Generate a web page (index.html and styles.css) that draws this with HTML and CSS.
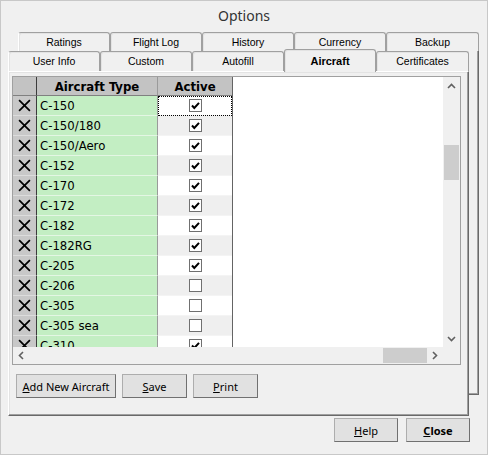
FILE: index.html
```html
<!DOCTYPE html>
<html>
<head>
<meta charset="utf-8">
<link rel="stylesheet" href="styles.css">
</head>
<body>
<div class="window">
  <div class="title">Options</div>
  <div class="tabs">
    <div class="tabrow backrow">
      <div class="tab">Ratings</div>
      <div class="tab">Flight Log</div>
      <div class="tab">History</div>
      <div class="tab">Currency</div>
      <div class="tab last">Backup</div>
    </div>
    <div class="stack">
      <div class="frontcol">
        <div class="tabrow frontrow">
          <div class="tab">User Info</div>
          <div class="tab">Custom</div>
          <div class="tab">Autofill</div>
          <div class="tab selected">Aircraft</div>
          <div class="tab last">Certificates</div>
        </div>
        <div class="page">
          <div class="grid">
            <div class="gridbody">
              <div class="table">
                <div class="row head">
                  <div class="c-del"></div>
                  <div class="c-type">Aircraft Type</div>
                  <div class="c-act">Active</div>
                </div>
                <div class="row"><div class="c-del"><svg class="x" viewBox="0 0 12 12"><path d="M1 1L11 11M11 1L1 11"/></svg></div><div class="c-type">C-150</div><div class="c-act focus"><span class="cb on"><svg viewBox="0 0 11 11"><path d="M2 5.5L4.3 8L9 2.8"/></svg></span></div></div>
                <div class="row alt"><div class="c-del"><svg class="x" viewBox="0 0 12 12"><path d="M1 1L11 11M11 1L1 11"/></svg></div><div class="c-type">C-150/180</div><div class="c-act"><span class="cb on"><svg viewBox="0 0 11 11"><path d="M2 5.5L4.3 8L9 2.8"/></svg></span></div></div>
                <div class="row"><div class="c-del"><svg class="x" viewBox="0 0 12 12"><path d="M1 1L11 11M11 1L1 11"/></svg></div><div class="c-type">C-150/Aero</div><div class="c-act"><span class="cb on"><svg viewBox="0 0 11 11"><path d="M2 5.5L4.3 8L9 2.8"/></svg></span></div></div>
                <div class="row alt"><div class="c-del"><svg class="x" viewBox="0 0 12 12"><path d="M1 1L11 11M11 1L1 11"/></svg></div><div class="c-type">C-152</div><div class="c-act"><span class="cb on"><svg viewBox="0 0 11 11"><path d="M2 5.5L4.3 8L9 2.8"/></svg></span></div></div>
                <div class="row"><div class="c-del"><svg class="x" viewBox="0 0 12 12"><path d="M1 1L11 11M11 1L1 11"/></svg></div><div class="c-type">C-170</div><div class="c-act"><span class="cb on"><svg viewBox="0 0 11 11"><path d="M2 5.5L4.3 8L9 2.8"/></svg></span></div></div>
                <div class="row alt"><div class="c-del"><svg class="x" viewBox="0 0 12 12"><path d="M1 1L11 11M11 1L1 11"/></svg></div><div class="c-type">C-172</div><div class="c-act"><span class="cb on"><svg viewBox="0 0 11 11"><path d="M2 5.5L4.3 8L9 2.8"/></svg></span></div></div>
                <div class="row"><div class="c-del"><svg class="x" viewBox="0 0 12 12"><path d="M1 1L11 11M11 1L1 11"/></svg></div><div class="c-type">C-182</div><div class="c-act"><span class="cb on"><svg viewBox="0 0 11 11"><path d="M2 5.5L4.3 8L9 2.8"/></svg></span></div></div>
                <div class="row alt"><div class="c-del"><svg class="x" viewBox="0 0 12 12"><path d="M1 1L11 11M11 1L1 11"/></svg></div><div class="c-type">C-182RG</div><div class="c-act"><span class="cb on"><svg viewBox="0 0 11 11"><path d="M2 5.5L4.3 8L9 2.8"/></svg></span></div></div>
                <div class="row"><div class="c-del"><svg class="x" viewBox="0 0 12 12"><path d="M1 1L11 11M11 1L1 11"/></svg></div><div class="c-type">C-205</div><div class="c-act"><span class="cb on"><svg viewBox="0 0 11 11"><path d="M2 5.5L4.3 8L9 2.8"/></svg></span></div></div>
                <div class="row alt"><div class="c-del"><svg class="x" viewBox="0 0 12 12"><path d="M1 1L11 11M11 1L1 11"/></svg></div><div class="c-type">C-206</div><div class="c-act"><span class="cb"></span></div></div>
                <div class="row"><div class="c-del"><svg class="x" viewBox="0 0 12 12"><path d="M1 1L11 11M11 1L1 11"/></svg></div><div class="c-type">C-305</div><div class="c-act"><span class="cb"></span></div></div>
                <div class="row alt"><div class="c-del"><svg class="x" viewBox="0 0 12 12"><path d="M1 1L11 11M11 1L1 11"/></svg></div><div class="c-type">C-305 sea</div><div class="c-act"><span class="cb"></span></div></div>
                <div class="row"><div class="c-del"><svg class="x" viewBox="0 0 12 12"><path d="M1 1L11 11M11 1L1 11"/></svg></div><div class="c-type">C-310</div><div class="c-act"><span class="cb on"><svg viewBox="0 0 11 11"><path d="M2 5.5L4.3 8L9 2.8"/></svg></span></div></div>
              </div>
              <div class="empty"></div>
              <div class="vscroll">
                <div class="sbtn"><svg viewBox="0 0 9 6"><path d="M1 5L4.5 1.5L8 5"/></svg></div>
                <div class="vtrack"><div class="vthumb"></div></div>
                <div class="sbtn"><svg viewBox="0 0 9 6"><path d="M1 1L4.5 4.5L8 1"/></svg></div>
              </div>
            </div>
            <div class="hscroll">
              <div class="sbtn h"><svg viewBox="0 0 6 9"><path d="M5 1L1.5 4.5L5 8"/></svg></div>
              <div class="htrack"><div class="hthumb"></div></div>
              <div class="sbtn h"><svg viewBox="0 0 6 9"><path d="M1 1L4.5 4.5L1 8"/></svg></div>
              <div class="corner"></div>
            </div>
          </div>
          <div class="pagebtns">
            <button class="btn wide"><u>A</u>dd New Aircraft</button>
            <button class="btn"><u>S</u>ave</button>
            <button class="btn"><u>P</u>rint</button>
          </div>
        </div>
      </div>
      <div class="strip"></div>
    </div>
  </div>
  <div class="footer">
    <button class="btn fbtn"><u>H</u>elp</button>
    <button class="btn fbtn bold"><u>C</u>lose</button>
  </div>
</div>
</body>
</html>
```
FILE: styles.css
```css
* { box-sizing: border-box; }
html, body { margin: 0; padding: 0; }
body { width: 488px; height: 455px; overflow: hidden; background: #ffffff; }

.window {
  width: 488px;
  height: 455px;
  border: 1px solid #c8c8c8;
  background: #f0f0f0;
  display: flex;
  flex-direction: column;
  font-family: "Liberation Sans", Arial, sans-serif;
  color: #000;
}

.title {
  height: 31px;
  line-height: 29px;
  text-align: center;
  font-family: "Noto Sans", "Open Sans", sans-serif;
  font-size: 14px;
  color: #333;
}

.tabs { padding-left: 7px; }

.tabrow { display: flex; }
.backrow { margin-left: 10px; height: 19px; }
.frontrow { height: 20px; position: relative; z-index: 1; }

.tab {
  width: 92px;
  border: 1px solid #a0a0a0;
  border-bottom: none;
  border-left-color: #ffffff;
  border-radius: 3px 3px 0 0;
  box-shadow: inset 1px 1px 0 #e3e3e3;
  background: #f0f0f0;
  text-align: center;
  font-size: 10.5px;
  color: #000;
}
.tab + .tab { border-left-color: #a0a0a0; }
.backrow .tab { height: 19px; line-height: 18px; }
.frontrow .tab { height: 20px; line-height: 19px; }
.tab.last { width: 93px; }
.frontrow .tab.selected {
  height: 23px;
  margin-top: -2px;
  line-height: 23px;
  font-weight: bold;
  font-size: 11px;
  background: #f0f0f0;
}

.stack { display: flex; align-items: flex-start; }
.frontcol { display: flex; flex-direction: column; width: 461px; }

.page {
  width: 461px;
  height: 345px;
  border: 1px solid;
  border-color: #ffffff #696969 #696969 #ffffff;
  box-shadow: inset -1px -1px 0 #a0a0a0, inset 1px 1px 0 #e3e3e3;
  padding: 4px 7px 0 3px;
  background: #f0f0f0;
}

.strip {
  width: 10px;
  height: 344px;
  border-right: 1px solid #696969;
  border-bottom: 1px solid #696969;
  box-shadow: inset -1px -1px 0 #a0a0a0;
}

.grid {
  width: 449px;
  height: 289px;
  border: 1px solid #a0a0a0;
  background: #ffffff;
  display: flex;
  flex-direction: column;
}

.gridbody { display: flex; height: 270px; overflow: hidden; }

.table {
  width: 220px;
  font-family: "DejaVu Sans Condensed", "DejaVu Sans", sans-serif;
  font-size: 13px;
  border-right: 1px solid #646464;
  overflow: hidden;
}

.row { display: flex; height: 20px; }
.row > div { height: 20px; border-bottom: 1px solid #e0e0e0; }

.c-del {
  width: 24px;
  background: #c8c8c8;
  border-right: 1px solid #3c3c3c;
  display: flex;
  align-items: center;
  justify-content: center;
}
.row > .c-del { border-bottom-color: #dcdcdc; }
.c-type {
  width: 121px;
  background: #c3eec3;
  border-right: 1px solid #9a9a9a;
  padding-left: 3px;
  line-height: 19px;
  white-space: nowrap;
}
.row > .c-type { border-bottom-color: #e4f6e4; }
.c-act {
  width: 74px;
  background: #ffffff;
  display: flex;
  align-items: center;
  justify-content: center;
}
.row.alt > .c-act { background: #efefef; }
.row > .c-act { border-bottom-color: #f4f4f4; }

.row.head > div {
  background: #c3c3c3;
  border-bottom: 1px solid #808080;
  font-weight: bold;
  text-align: center;
  padding: 0;
  line-height: 19px;
  display: block;
  height: 19px;
}
.row.head { height: 19px; }

.c-act.focus { outline: 1px dotted #000; outline-offset: -1px; }

svg.x { width: 13px; height: 13px; }
svg.x path { stroke: #000; stroke-width: 1.6; fill: none; }

.cb {
  width: 13px;
  height: 13px;
  border: 1px solid #707070;
  background: #fff;
  display: flex;
  align-items: center;
  justify-content: center;
}
.cb svg { width: 11px; height: 11px; }
.cb svg path { stroke: #000; stroke-width: 2; fill: none; }

.empty { flex: 1; background: #ffffff; }

.vscroll {
  width: 17px;
  background: #f0f0f0;
  display: flex;
  flex-direction: column;
}
.sbtn {
  height: 17px;
  display: flex;
  align-items: center;
  justify-content: center;
}
.sbtn svg { width: 9px; height: 6px; }
.sbtn svg path { stroke: #606060; stroke-width: 1.6; fill: none; }
.vtrack { flex: 1; padding: 51px 1px 0 1px; }
.vthumb { height: 35px; background: #cdcdcd; }

.hscroll {
  height: 17px;
  display: flex;
  background: #f0f0f0;
}
.sbtn.h { height: 17px; width: 17px; }
.sbtn.h svg { width: 6px; height: 9px; }
.htrack { flex: 1; padding: 1px 0 1px 354px; }
.hthumb { width: 44px; height: 100%; background: #cdcdcd; }
.corner { width: 17px; background: #f0f0f0; }

.pagebtns { display: flex; gap: 6px; margin: 9px 0 0 4px; }

.btn {
  height: 24px;
  width: 65px;
  padding: 0;
  border: 1px solid #adadad;
  border-right-color: #707070;
  border-bottom-color: #707070;
  background: #e1e1e1;
  font-family: "Noto Sans", "Open Sans", sans-serif;
  font-size: 11px;
  color: #000;
}
.btn.wide { width: 100px; }

.footer {
  display: flex;
  justify-content: flex-end;
  gap: 8px;
  padding: 2px 17px 0 0;
}
.fbtn { width: 64px; }
.bold { font-weight: bold; }
```
